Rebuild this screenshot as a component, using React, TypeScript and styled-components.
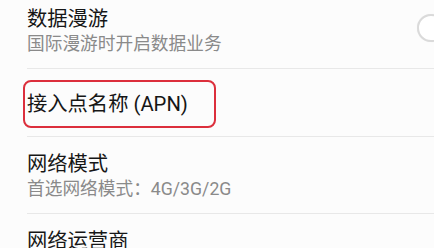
import React from "react";
import styled, { createGlobalStyle } from "styled-components";

const GlobalStyle = createGlobalStyle`
  html, body {
    margin: 0;
    padding: 0;
    background: #fcfcfc;
    overflow: hidden;
  }
  body {
    font-family: Roboto, "Noto Sans CJK SC", "Noto Sans", sans-serif;
    color: #161616;
  }
`;

const Liste = styled.div`
  display: flex;
  flex-direction: column;
  margin-top: -8px;
`;

const Rad = styled.div<{ $kompakt?: boolean }>`
  display: flex;
  align-items: center;
  justify-content: space-between;
  margin-left: 27px;
  padding: ${(p) => (p.$kompakt ? "11px 0 8px 0" : "14px 0 12px 0")};
  border-bottom: 1px solid #e8e8e8;
`;

const Tekster = styled.div`
  display: flex;
  flex-direction: column;
`;

const Tittel = styled.div`
  font-size: 20.3px;
  line-height: 26px;
  color: #161616;
`;

const Undertittel = styled.div`
  font-size: 17.7px;
  line-height: 24px;
  color: #8a8a8a;
`;

const Markering = styled.div`
  display: flex;
  align-items: center;
  box-sizing: border-box;
  width: 193px;
  height: 48px;
  margin-left: -4px;
  padding-left: 2px;
  border: 2px solid #dc2f3c;
  border-radius: 8px;
`;

const Bryter = styled.div`
  flex-shrink: 0;
  box-sizing: border-box;
  width: 28px;
  height: 28px;
  margin-right: -11px;
  margin-bottom: 6px;
  border-radius: 50%;
  background: #ffffff;
  border: 2px solid #dadada;
  box-shadow: 0 0 1px rgba(0, 0, 0, 0.08);
`;

export default function App() {
  return (
    <>
      <GlobalStyle />
      <Liste>
        <Rad>
          <Tekster>
            <Tittel>数据漫游</Tittel>
            <Undertittel>国际漫游时开启数据业务</Undertittel>
          </Tekster>
          <Bryter />
        </Rad>
        <Rad $kompakt>
          <Markering>
            <Tittel>接入点名称 (APN)</Tittel>
          </Markering>
        </Rad>
        <Rad>
          <Tekster>
            <Tittel>网络模式</Tittel>
            <Undertittel>首选网络模式：4G/3G/2G</Undertittel>
          </Tekster>
        </Rad>
        <Rad>
          <Tekster>
            <Tittel>网络运营商</Tittel>
          </Tekster>
        </Rad>
      </Liste>
    </>
  );
}
